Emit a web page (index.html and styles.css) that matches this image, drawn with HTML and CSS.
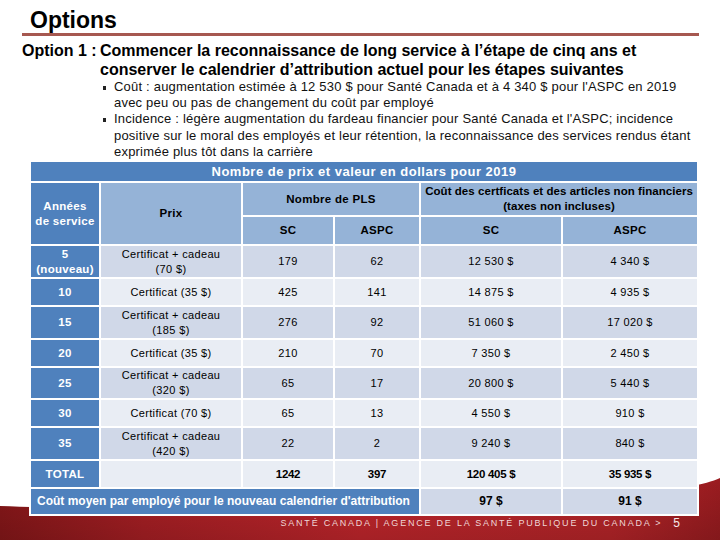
FILE: index.html
```html
<!DOCTYPE html>
<html lang="fr">
<head>
<meta charset="utf-8">
<title>Options</title>
<link rel="stylesheet" href="styles.css">
</head>
<body>
<div class="slide">
  <svg class="swoosh" viewBox="0 0 720 70" preserveAspectRatio="none" aria-hidden="true">
    <defs>
      <linearGradient id="rg" x1="0" y1="0" x2="1" y2="0">
        <stop offset="0" stop-color="#861719"/>
        <stop offset="0.2" stop-color="#a81f24"/>
        <stop offset="0.5" stop-color="#c2262c"/>
        <stop offset="0.85" stop-color="#b72529"/>
        <stop offset="1" stop-color="#9a1c20"/>
      </linearGradient>
      <linearGradient id="shade" x1="0" y1="0" x2="0" y2="1">
        <stop offset="0" stop-color="#000" stop-opacity="0"/>
        <stop offset="1" stop-color="#000" stop-opacity="0.15"/>
      </linearGradient>
    </defs>
    <path d="M0,36 C150,42 640,44 720,8 L720,70 L0,70 Z" fill="url(#rg)"/>
    <path d="M0,36 C150,42 640,44 720,8 L720,70 L0,70 Z" fill="url(#shade)"/>
  </svg>

  <h1 class="title">Options</h1>
  <div class="rule"></div>
  <h2 class="option">
    <span class="opt-label">Option 1 :</span>
    <span class="opt-text">Commencer la reconnaissance de long service à l’étape de cinq ans et conserver le calendrier d’attribution actuel pour les étapes suivantes</span>
  </h2>
  <ul class="points">
    <li>Coût : augmentation estimée à 12&nbsp;530&nbsp;$ pour Santé Canada et à 4&nbsp;340&nbsp;$ pour l'ASPC en 2019 avec peu ou pas de changement du coût par employé</li>
    <li>Incidence : légère augmentation du fardeau financier pour Santé Canada et l'ASPC; incidence positive sur le moral des employés et leur rétention, la reconnaissance des services rendus étant exprimée plus tôt dans la carrière</li>
  </ul>

  <div class="table-wrap">
    <table class="prices">
      <colgroup>
        <col class="c1"><col class="c2"><col class="c3"><col class="c4"><col class="c5"><col class="c6">
      </colgroup>
      <thead>
        <tr class="r-title"><th colspan="6">Nombre de prix et valeur en dollars pour 2019</th></tr>
        <tr class="r-h1">
          <th rowspan="2" class="yr">Années<br>de service</th>
          <th rowspan="2" class="hl">Prix</th>
          <th colspan="2" class="hl">Nombre de PLS</th>
          <th colspan="2" class="hl cost">Coût des certficats et des articles non financiers<br>(taxes non incluses)</th>
        </tr>
        <tr class="r-h2">
          <th class="hl">SC</th><th class="hl">ASPC</th><th class="hl">SC</th><th class="hl">ASPC</th>
        </tr>
      </thead>
      <tbody>
        <tr class="odd tall"><th class="yr">5<br>(nouveau)</th><td>Certificat + cadeau<br>(70 $)</td><td>179</td><td>62</td><td>12 530 $</td><td>4 340 $</td></tr>
        <tr class="even short"><th class="yr">10</th><td>Certificat (35 $)</td><td>425</td><td>141</td><td>14 875 $</td><td>4 935 $</td></tr>
        <tr class="odd tall"><th class="yr">15</th><td>Certificat + cadeau<br>(185 $)</td><td>276</td><td>92</td><td>51 060 $</td><td>17 020 $</td></tr>
        <tr class="even short"><th class="yr">20</th><td>Certificat (35 $)</td><td>210</td><td>70</td><td>7 350 $</td><td>2 450 $</td></tr>
        <tr class="odd tall t30"><th class="yr">25</th><td>Certificat + cadeau<br>(320 $)</td><td>65</td><td>17</td><td>20 800 $</td><td>5 440 $</td></tr>
        <tr class="even short"><th class="yr">30</th><td>Certificat (70 $)</td><td>65</td><td>13</td><td>4 550 $</td><td>910 $</td></tr>
        <tr class="odd tall"><th class="yr">35</th><td>Certificat + cadeau<br>(420 $)</td><td>22</td><td>2</td><td>9 240 $</td><td>840 $</td></tr>
        <tr class="even short total"><th class="yr">TOTAL</th><td></td><td>1242</td><td>397</td><td>120 405 $</td><td>35 935 $</td></tr>
        <tr class="odd avg"><th colspan="4" class="yr avg-label">Coût moyen par employé pour le nouveau calendrier d'attribution</th><td>97 $</td><td>91 $</td></tr>
      </tbody>
    </table>
  </div>

  <div class="brand">
    <span class="brand-text">SANTÉ CANADA | AGENCE DE LA SANTÉ PUBLIQUE DU CANADA &gt;</span>
    <span class="page-no">5</span>
  </div>
</div>
</body>
</html>
```

FILE: styles.css
```css
* { box-sizing: border-box; }

html, body {
  margin: 0;
  padding: 0;
  background: #fff;
}

body {
  font-family: "Liberation Sans", Arial, sans-serif;
  color: #000;
}

.slide {
  position: relative;
  width: 720px;
  height: 540px;
  overflow: hidden;
  background: #fff;
  display: flex;
  flex-direction: column;
}

.swoosh {
  position: absolute;
  left: 0;
  bottom: 0;
  width: 720px;
  height: 70px;
  z-index: 0;
}

.title, .rule, .option, .points, .table-wrap, .brand {
  position: relative;
  z-index: 1;
}

.title {
  margin: 8px 0 0 30px;
  font-size: 23px;
  line-height: 24px;
  font-weight: bold;
}

.rule {
  margin: 1px 21px 0 22px;
  height: 3px;
  background: #a65850;
}

.option {
  margin: 5px 0 0 22px;
  display: grid;
  grid-template-columns: 78px 580px;
  font-size: 16px;
  line-height: 19px;
  font-weight: bold;
}

.points {
  margin: 0;
  padding: 0 0 0 114px;
  width: 698px;
  height: 81px;
  list-style: none;
  font-size: 13px;
  line-height: 16.2px;
  letter-spacing: 0.2px;
  color: #111;
}

.points li {
  position: relative;
}

.points li::before {
  content: "";
  position: absolute;
  left: -11px;
  top: 7px;
  width: 3px;
  height: 4px;
  background: #222;
}

.table-wrap {
  margin: 0 0 0 29px;
  width: 670px;
}

.prices {
  width: 670px;
  table-layout: fixed;
  border-collapse: separate;
  border-spacing: 2px;
  background: #fff;
}

.c1 { width: 68px; }
.c2 { width: 140px; }
.c3 { width: 90px; }
.c4 { width: 84px; }
.c5 { width: 140px; }
.c6 { width: 134px; }

.prices th,
.prices td {
  padding: 0;
  text-align: center;
  vertical-align: middle;
}

.prices td {
  font-size: 11px;
  line-height: 15px;
  letter-spacing: 0.35px;
  font-weight: normal;
}

.r-title th {
  height: 19px;
  background: #4f81bd;
  color: #fff;
  font-size: 13px;
  line-height: 15px;
  letter-spacing: 0.5px;
  font-weight: bold;
}

.r-h1 th { height: 32px; }
.r-h2 th { height: 27px; }

.prices thead .hl,
.prices thead .yr {
  font-size: 11.5px;
  line-height: 15px;
  letter-spacing: 0.3px;
  font-weight: bold;
}

.hl {
  background: #95b3d7;
  color: #000;
}

.prices thead .hl.cost {
  letter-spacing: 0.05px;
  white-space: nowrap;
}

.yr {
  background: #4f81bd;
  color: #fff;
  font-size: 11.5px;
  line-height: 15px;
  letter-spacing: 0.3px;
  font-weight: bold;
}

.odd td { background: #d0d8e8; }
.even td { background: #e9edf4; }

.tall th, .tall td { height: 31px; }
.tall.t30 th, .tall.t30 td { height: 30px; }
.short th, .short td { height: 26px; }

.total td {
  font-weight: bold;
  font-size: 11.5px;
  letter-spacing: -0.3px;
}

.avg th, .avg td { height: 25px; }

.avg td {
  font-weight: bold;
  font-size: 12px;
  letter-spacing: 0;
}

.avg-label {
  text-align: left !important;
  padding-left: 6px !important;
  font-size: 12px !important;
  letter-spacing: 0 !important;
}

.brand {
  display: flex;
  justify-content: flex-end;
  align-items: center;
  gap: 11px;
  height: 13px;
  padding-right: 40px;
}

.brand-text {
  font-size: 9px;
  letter-spacing: 1.78px;
  color: #efd6d6;
  white-space: nowrap;
}

.page-no {
  font-size: 12px;
  color: #f6eaea;
}
```
